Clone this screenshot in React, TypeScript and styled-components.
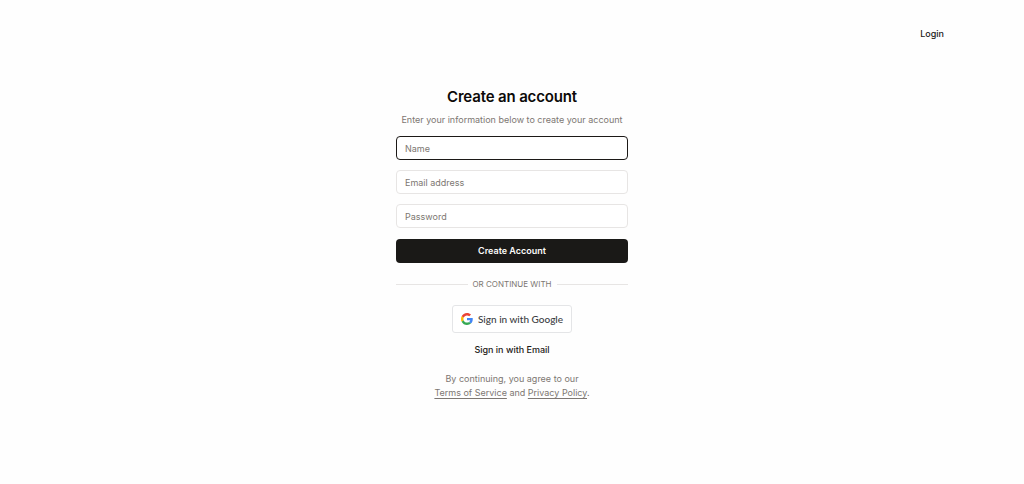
import React from "react";
import styled, { createGlobalStyle } from "styled-components";

const GlobalStyle = createGlobalStyle`
  *, *::before, *::after { box-sizing: border-box; }
  body {
    margin: 0;
    background: #fefefe;
    color: #1c1917;
    font-family: Inter, "Liberation Sans", sans-serif;
    font-size: 9px;
    line-height: 14px;
  }
`;

const Page = styled.div`
  min-height: 100vh;
  display: flex;
  flex-direction: column;
`;

const Header = styled.header`
  display: flex;
  justify-content: flex-end;
  padding: 27px 80px 0;
`;

const LoginLink = styled.a`
  color: #1c1917;
  font-weight: 500;
  text-decoration: none;
`;

const Main = styled.main`
  width: 100%;
  max-width: 264px;
  margin: 0 auto;
  padding: 45px 16px 24px;
  display: flex;
  flex-direction: column;
`;

const Title = styled.h1`
  margin: 0;
  font-size: 15px;
  line-height: 22px;
  font-weight: 600;
  letter-spacing: -0.01em;
  text-align: center;
  color: #0c0a09;
`;

const Subtitle = styled.p`
  margin: 5px 0 9px;
  text-align: center;
  white-space: nowrap;
  color: #7d7772;
`;

const Form = styled.form`
  display: flex;
  flex-direction: column;
  gap: 11px;
`;

const Fields = styled.div`
  display: flex;
  flex-direction: column;
  gap: 10px;
`;

const Input = styled.input<{ $active?: boolean }>`
  width: 100%;
  height: 24px;
  padding: 0 8px;
  border: 1px solid ${(p) => (p.$active ? "#1c1917" : "#e7e5e4")};
  border-radius: 4px;
  outline: none;
  background: #ffffff;
  color: #1c1917;
  font: inherit;
  &::placeholder { color: #7d7772; opacity: 1; }
`;

const SubmitButton = styled.button`
  height: 24px;
  border: 0;
  border-radius: 4px;
  background: #1a1917;
  color: #fafaf9;
  font: inherit;
  font-weight: 600;
`;

const Divider = styled.div`
  display: flex;
  align-items: center;
  gap: 5px;
  margin: 14px 0;
  font-size: 8px;
  color: #7d7772;
  &::before, &::after {
    content: "";
    flex: 1;
    border-top: 1px solid #e7e5e4;
  }
`;

const GoogleButton = styled.button`
  align-self: center;
  display: flex;
  align-items: center;
  gap: 5px;
  height: 28px;
  padding: 0 8px;
  border: 1px solid #e4e5e7;
  border-radius: 3px;
  background: #ffffff;
  color: #3c4043;
  font: inherit;
  font-family: Lato, Inter, sans-serif;
  font-size: 10px;
  font-weight: 500;
`;

const EmailButton = styled.button`
  align-self: center;
  margin: 10px 0 15px;
  padding: 0;
  border: 0;
  background: none;
  color: #1c1917;
  font: inherit;
  font-weight: 500;
`;

const Terms = styled.p`
  margin: 0;
  text-align: center;
  color: #7d7772;
`;

const TermsLink = styled.a`
  color: inherit;
  text-decoration: underline;
  text-underline-offset: 2px;
`;

const GoogleLogo = () => (
  <svg width="12" height="12" viewBox="0 0 48 48" aria-hidden="true">
    <path fill="#EA4335" d="M24 9.5c3.54 0 6.71 1.22 9.21 3.6l6.85-6.85C35.9 2.38 30.47 0 24 0 14.62 0 6.51 5.38 2.56 13.22l7.98 6.19C12.43 13.72 17.74 9.5 24 9.5z" />
    <path fill="#4285F4" d="M46.98 24.55c0-1.57-.15-3.09-.38-4.55H24v9.02h12.94c-.58 2.96-2.26 5.48-4.78 7.18l7.73 6c4.51-4.18 7.09-10.36 7.09-17.65z" />
    <path fill="#FBBC05" d="M10.53 28.59c-.48-1.45-.76-2.99-.76-4.59s.27-3.14.76-4.59l-7.98-6.19C.92 16.46 0 20.12 0 24c0 3.88.92 7.54 2.56 10.78l7.97-6.19z" />
    <path fill="#34A853" d="M24 48c6.48 0 11.93-2.13 15.89-5.81l-7.73-6c-2.15 1.45-4.92 2.3-8.16 2.3-6.26 0-11.57-4.22-13.47-9.91l-7.98 6.19C6.51 42.62 14.62 48 24 48z" />
  </svg>
);

export default function App() {
  return (
    <>
      <GlobalStyle />
      <Page>
        <Header>
          <LoginLink href="#login">Login</LoginLink>
        </Header>
        <Main>
          <Title>Create an account</Title>
          <Subtitle>Enter your information below to create your account</Subtitle>
          <Form onSubmit={(e) => e.preventDefault()}>
            <Fields>
              <Input $active type="text" placeholder="Name" aria-label="Name" />
              <Input type="email" placeholder="Email address" aria-label="Email address" />
              <Input type="password" placeholder="Password" aria-label="Password" />
            </Fields>
            <SubmitButton type="submit">Create Account</SubmitButton>
          </Form>
          <Divider>OR CONTINUE WITH</Divider>
          <GoogleButton type="button">
            <GoogleLogo />
            Sign in with Google
          </GoogleButton>
          <EmailButton type="button">Sign in with Email</EmailButton>
          <Terms>
            By continuing, you agree to our
            <br />
            <TermsLink href="#terms">Terms of Service</TermsLink> and{" "}
            <TermsLink href="#privacy">Privacy Policy</TermsLink>.
          </Terms>
        </Main>
      </Page>
    </>
  );
}
